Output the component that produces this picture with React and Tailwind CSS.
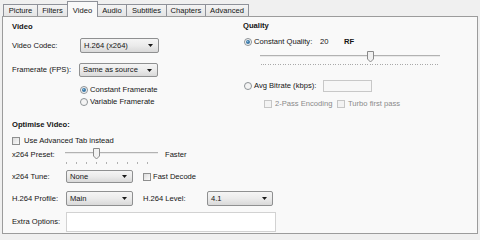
import React from "react";

function Select({ w, h, children }) {
  return (
    <div className={`${w} ${h} shrink-0 border border-[#8f9091] rounded-[2px] bg-linear-to-b from-[#f5f5f5] via-[#ebebeb] to-[#d9d9d9] flex items-center justify-between pl-[3px] pr-[5px]`}>
      <span className="leading-[10px]">{children}</span>
      <svg width="5" height="3" viewBox="0 0 5 3" className="shrink-0">
        <path d="M0 0h5L2.5 3z" fill="#1a1a1a" />
      </svg>
    </div>
  );
}

function Radio({ checked }) {
  return (
    <svg width="8" height="8" viewBox="0 0 8 8" className="shrink-0">
      <circle cx="4" cy="4" r="3.5" fill="#e6e6e6" stroke="#8d9296" strokeWidth="1" />
      <circle cx="4" cy="4" r="2.6" fill="#f4f4f4" />
      {checked && <circle cx="4" cy="4" r="2" fill="#3b78a6" />}
      {checked && <circle cx="3.6" cy="3.5" r="0.8" fill="#8cc0e0" />}
    </svg>
  );
}

function Checkbox({ disabled }) {
  return (
    <div
      className={`w-[8px] h-[8px] shrink-0 border ${
        disabled ? "border-[#c6c6c6] bg-[#f3f3f3]" : "border-[#8e8f8f] bg-linear-to-br from-[#dcdcdc] to-[#fbfbfb]"
      }`}
    />
  );
}

function Thumb() {
  return (
    <svg width="7" height="12" viewBox="0 0 7 12">
      <path d="M0.5 0.5h6v7.5l-3 3l-3-3z" fill="#f1f1f1" stroke="#8a8a8a" strokeWidth="1" />
    </svg>
  );
}

function Slider({ w, pos, ticks, trackTop, thumbTop, tickTop, tickH, tickColor }) {
  const xs = [];
  for (let i = 0; i < ticks; i++) xs.push(0.5 + (i * (w - 1)) / (ticks - 1));
  return (
    <div className="relative h-[18px] shrink-0" style={{ width: w }}>
      <div className="absolute left-0 right-0 h-[2px] border-t border-[#b2b2b2] bg-[#e9e9e9]" style={{ top: trackTop }} />
      <div className="absolute" style={{ left: pos - 3, top: thumbTop }}>
        <Thumb />
      </div>
      <svg className="absolute left-0" style={{ top: tickTop }} width={w} height={tickH}>
        {xs.map((x, i) => (
          <line key={i} x1={Math.round(x) + 0.5} x2={Math.round(x) + 0.5} y1="0" y2={tickH} stroke={tickColor} strokeWidth="1" />
        ))}
      </svg>
    </div>
  );
}

function Tab({ label, w, active, first }) {
  return (
    <div
      className={`${w} ${first ? "" : "-ml-px"} border-t border-l border-r border-[#8e9199] flex items-center justify-center ${
        active ? "h-[16px] -mb-px bg-[#f9f9f9] relative z-10 pt-[2px]" : "h-[12px] bg-linear-to-b from-[#f4f4f4] to-[#e4e4e4]"
      }`}
    >
      <span className="leading-[10px]">{label}</span>
    </div>
  );
}

export default function App() {
  return (
    <div className="w-[480px] h-[240px] bg-[#f0f0f0] overflow-hidden pl-[2px] font-['Liberation_Sans',Arial,sans-serif] text-[7.6px] leading-[10px] text-[#141414]">
      <div className="h-[16px] flex items-end pl-[1px]">
        <Tab label="Picture" w="w-[35px]" first />
        <Tab label="Filters" w="w-[31px]" />
        <Tab label="Video" w="w-[31px]" active />
        <Tab label="Audio" w="w-[30px]" />
        <Tab label="Subtitles" w="w-[41px]" />
        <Tab label="Chapters" w="w-[40px]" />
        <Tab label="Advanced" w="w-[44px]" />
      </div>
      <div className="w-[476px] h-[218px] border border-[#9c9c9c] bg-[#f9f9f9] flex flex-col">
        <div className="h-[98px] flex shrink-0">
          <div className="w-[240px] pl-[9px] flex flex-col">
            <div className="h-[10px] mt-[5px] font-bold">Video</div>
            <div className="h-[15px] mt-[6px] flex items-center">
              <span className="w-[68px] shrink-0">Video Codec:</span>
              <Select w="w-[79px]" h="h-[15px]">H.264 (x264)</Select>
            </div>
            <div className="h-[14px] mt-[10px] flex items-center">
              <span className="w-[67px] shrink-0">Framerate (FPS):</span>
              <Select w="w-[79px]" h="h-[14px]">Same as source</Select>
            </div>
            <div className="h-[10px] mt-[8px] flex items-center pl-[68px]">
              <Radio checked />
              <span className="ml-[2px]">Constant Framerate</span>
            </div>
            <div className="h-[10px] mt-[2px] flex items-center pl-[68px]">
              <Radio />
              <span className="ml-[2px]">Variable Framerate</span>
            </div>
          </div>
          <div className="flex-1 flex flex-col">
            <div className="h-[10px] mt-[4px] font-bold">Quality</div>
            <div className="h-[10px] mt-[6px] flex items-center pl-[1px]">
              <Radio checked />
              <span className="ml-[2px] w-[66px] shrink-0">Constant Quality:</span>
              <span className="w-[24px] shrink-0">20</span>
              <span className="font-bold">RF</span>
            </div>
            <div className="mt-[3px] pl-[17px]">
              <Slider w={180} pos={110} ticks={73} trackTop={5} thumbTop={1} tickTop={14} tickH={1} tickColor="#a8a8a8" />
            </div>
            <div className="h-[12px] mt-[12px] flex items-center pl-[1px]">
              <Radio />
              <span className="ml-[2px] w-[69px] shrink-0">Avg Bitrate (kbps):</span>
              <div className="w-[49px] h-[12px] border border-[#c8c8c8] bg-[#f7f7f7]" />
            </div>
            <div className="h-[10px] mt-[7px] flex items-center pl-[21px] text-[#8a8a8a]">
              <Checkbox disabled />
              <span className="ml-[3px] w-[62px] shrink-0">2-Pass Encoding</span>
              <Checkbox disabled />
              <span className="ml-[3px]">Turbo first pass</span>
            </div>
          </div>
        </div>
        <div className="flex flex-col pl-[9px]">
          <div className="h-[10px] mt-[5px] font-bold">Optimise Video:</div>
          <div className="h-[10px] mt-[6px] flex items-center">
            <Checkbox />
            <span className="ml-[4px]">Use Advanced Tab instead</span>
          </div>
          <div className="h-[18px] mt-[1px] flex items-start">
            <span className="w-[53px] shrink-0 mt-[3px]">x264 Preset:</span>
            <Slider w={93} pos={31} ticks={10} trackTop={5} thumbTop={1} tickTop={15} tickH={2} tickColor="#b0b0b0" />
            <span className="ml-[7px] mt-[3px]">Faster</span>
          </div>
          <div className="h-[13px] mt-[5px] flex items-center">
            <span className="w-[54px] shrink-0">x264 Tune:</span>
            <Select w="w-[67px]" h="h-[13px]">None</Select>
            <div className="ml-[10px]">
              <Checkbox />
            </div>
            <span className="ml-[2px]">Fast Decode</span>
          </div>
          <div className="h-[15px] mt-[8px] flex items-center">
            <span className="w-[54px] shrink-0">H.264 Profile:</span>
            <Select w="w-[67px]" h="h-[15px]">Main</Select>
            <span className="ml-[10px] w-[64px] shrink-0">H.264 Level:</span>
            <Select w="w-[66px]" h="h-[15px]">4.1</Select>
          </div>
          <div className="h-[20px] mt-[6px] flex items-center">
            <span className="w-[54px] shrink-0">Extra Options:</span>
            <div className="w-[210px] h-[20px] border border-[#d2d2d2] bg-white" />
          </div>
        </div>
      </div>
    </div>
  );
}
